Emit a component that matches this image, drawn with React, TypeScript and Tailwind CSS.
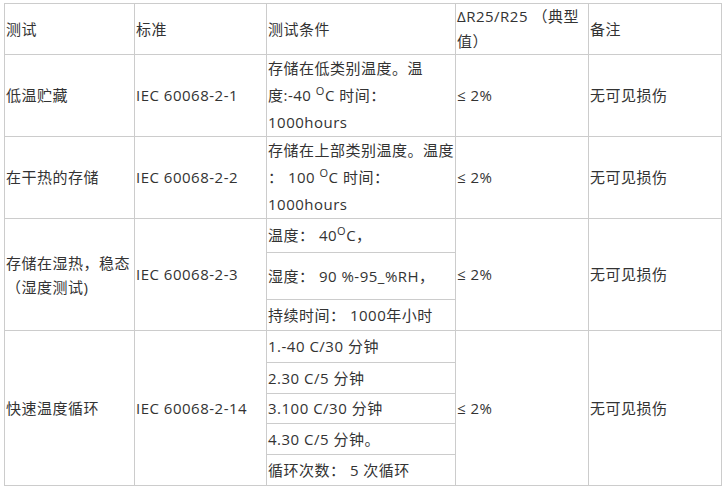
import React from "react";

const cell = "border border-[#cccccc] align-middle px-[1px] py-0 text-left font-normal";

function Deg() {
  return <sup className="text-[11px] top-[-0.55em]">O</sup>;
}

export default function App() {
  return (
    <div
      className="w-[727px] h-[492px] bg-white pl-[4px] pt-[3px] text-[15px] leading-[25px] tracking-[0.5px] text-[#333333]"
      style={{ fontFamily: '"Open Sans", "Noto Sans CJK SC", sans-serif' }}
    >
      <table className="border-collapse table-fixed w-[717px]">
        <colgroup>
          <col className="w-[130px]" />
          <col className="w-[132px]" />
          <col className="w-[189px]" />
          <col className="w-[133px]" />
          <col className="w-[133px]" />
        </colgroup>
        <thead>
          <tr className="h-[51px]">
            <th className={cell}>测试</th>
            <th className={cell}>标准</th>
            <th className={cell}>测试条件</th>
            <th className={cell}>
              ΔR25/R25 （典型
              <br />
              值）
            </th>
            <th className={cell}>备注</th>
          </tr>
        </thead>
        <tbody>
          <tr className="h-[82px]">
            <td className={cell}>低温贮藏</td>
            <td className={cell}>IEC 60068-2-1</td>
            <td className={`${cell} leading-[27px]`}>
              存储在低类别温度。温
              <br />
              度:-40 <Deg />C 时间：
              <br />
              1000hours
            </td>
            <td className={cell}>≤ 2%</td>
            <td className={cell}>无可见损伤</td>
          </tr>
          <tr className="h-[82px]">
            <td className={cell}>在干热的存储</td>
            <td className={cell}>IEC 60068-2-2</td>
            <td className={`${cell} leading-[27px]`}>
              存储在上部类别温度。温度
              <br />
              ： 100 <Deg />C 时间：
              <br />
              1000hours
            </td>
            <td className={cell}>≤ 2%</td>
            <td className={cell}>无可见损伤</td>
          </tr>
          <tr className="h-[34px]">
            <td className={`${cell} leading-[24px]`} rowSpan={3}>
              存储在湿热，稳态
              <br />
              （湿度测试)
            </td>
            <td className={cell} rowSpan={3}>
              IEC 60068-2-3
            </td>
            <td className={cell}>
              温度： 40<Deg />C，
            </td>
            <td className={cell} rowSpan={3}>
              ≤ 2%
            </td>
            <td className={cell} rowSpan={3}>
              无可见损伤
            </td>
          </tr>
          <tr className="h-[47px]">
            <td className={cell}>湿度： 90 %-95_%RH，</td>
          </tr>
          <tr className="h-[31px]">
            <td className={cell}>持续时间： 1000年小时</td>
          </tr>
          <tr className="h-[32px]">
            <td className={cell} rowSpan={5}>
              快速温度循环
            </td>
            <td className={cell} rowSpan={5}>
              IEC 60068-2-14
            </td>
            <td className={cell}>1.-40 C/30 分钟</td>
            <td className={cell} rowSpan={5}>
              ≤ 2%
            </td>
            <td className={cell} rowSpan={5}>
              无可见损伤
            </td>
          </tr>
          <tr className="h-[31px]">
            <td className={cell}>2.30 C/5 分钟</td>
          </tr>
          <tr className="h-[30px]">
            <td className={cell}>3.100 C/30 分钟</td>
          </tr>
          <tr className="h-[31px]">
            <td className={cell}>4.30 C/5 分钟。</td>
          </tr>
          <tr className="h-[31px]">
            <td className={cell}>循环次数： 5 次循环</td>
          </tr>
        </tbody>
      </table>
    </div>
  );
}
